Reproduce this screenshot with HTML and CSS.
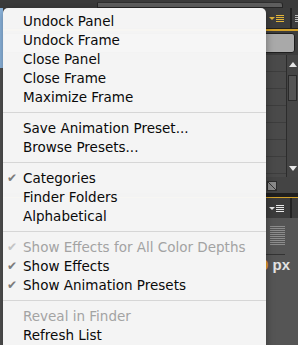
FILE: index.html
```html
<!DOCTYPE html>
<html lang="en">
<head>
  <meta charset="UTF-8" />
  <title>Effects &amp; Presets menu</title>
  <link rel="stylesheet" href="styles.css">
</head>
<body>

  <div class="app">
    <div class="topbar">
      <div class="topfield"></div>
    </div>

    <div class="workspace">
      <div class="leftstrip"></div>

      <div class="panel">
        <div class="panel-header">
          <span class="panel-menu yellow">
            <span class="tri"></span>
            <span class="lines"><i></i><i></i><i></i><i></i></span>
          </span>
          <span class="divider"></span>
          <span class="next-tab"><i></i><i></i><i></i><i></i></span>
        </div>
        <div class="accent"></div>
        <div class="search-row">
          <div class="search"></div>
        </div>
        <div class="list">
          <div class="rows">
            <div class="row"></div><div class="row"></div><div class="row"></div>
            <div class="row"></div><div class="row"></div><div class="row"></div>
            <div class="row"></div>
          </div>
          <div class="scrollbar">
            <span class="arrow up"></span>
            <span class="thumb"></span>
            <span class="arrow down"></span>
          </div>
        </div>
        <div class="panel-footer">
          <span class="resize"></span>
        </div>
        <div class="accent thick"></div>
        <div class="panel-header">
          <span class="panel-menu white">
            <span class="tri"></span>
            <span class="lines"><i></i><i></i><i></i><i></i></span>
          </span>
          <span class="divider"></span>
          <span class="next-tab"></span>
        </div>
        <div class="props">
          <div class="grip"><i></i><i></i><i></i><i></i><i></i><i></i><i></i><i></i><i></i><i></i></div>
          <div class="rule"></div>
          <div class="value"><b>0</b> px</div>
        </div>
      </div>
    </div>
  </div>

  <ul class="menu">
    <li>Undock Panel</li>
    <li>Undock Frame</li>
    <li>Close Panel</li>
    <li>Close Frame</li>
    <li>Maximize Frame</li>
    <li class="sep"></li>
    <li>Save Animation Preset...</li>
    <li>Browse Presets...</li>
    <li class="sep"></li>
    <li class="checked">Categories</li>
    <li>Finder Folders</li>
    <li>Alphabetical</li>
    <li class="sep"></li>
    <li class="checked disabled">Show Effects for All Color Depths</li>
    <li class="checked">Show Effects</li>
    <li class="checked">Show Animation Presets</li>
    <li class="sep"></li>
    <li class="disabled">Reveal in Finder</li>
    <li>Refresh List</li>
  </ul>

</body>
</html>
```

FILE: styles.css
```css
*, *::before, *::after { box-sizing: border-box; }

body {
  margin: 0;
  width: 298px;
  height: 345px;
  overflow: hidden;
  background-color: #555555;
  font-family: 'DejaVu Sans', Verdana, sans-serif;
  position: relative;
}

/* ---------- the application behind the menu ---------- */

.app {
  display: flex;
  flex-direction: column;
  height: 100%;
}

.topbar {
  height: 8px;
  background-color: #3b3b3b;
  padding: 2px 0 0 97px;
  display: flex;
}

.topfield {
  width: 186px;
  height: 6px;
  background-color: #5e5e5e;
  border: 1px solid #262626;
  border-top-color: #2f2f2f;
  border-radius: 0 3px 0 0;
}

.workspace {
  flex: 1;
  display: flex;
}

.leftstrip {
  width: 3px;
  background: linear-gradient(#8db6df 0, #8db6df 60px, #505050 60px);
}

.panel {
  flex: 1;
  display: flex;
  flex-direction: column;
  background-color: #555555;
}

.panel-header {
  height: 20px;
  background-color: #3c3c3c;
  display: flex;
  justify-content: flex-end;
  align-items: stretch;
}

.panel-menu {
  width: 13px;
  margin-right: 8px;
  display: flex;
  align-items: center;
  gap: 1px;
}

.panel-menu .tri {
  width: 0;
  height: 0;
  border-left: 3px solid transparent;
  border-right: 3px solid transparent;
  border-top: 3px solid #e0b33a;
}

.panel-menu .lines {
  display: flex;
  flex-direction: column;
  gap: 1px;
}

.panel-menu .lines i {
  display: block;
  width: 8px;
  height: 1px;
  background-color: #e0b33a;
}

.panel-menu.white .tri { border-top-color: #e8e8e8; }
.panel-menu.white .lines i { background-color: #e8e8e8; }

.divider {
  width: 2px;
  background-color: #222222;
}

.next-tab {
  width: 6px;
  display: flex;
  flex-direction: column;
  justify-content: center;
  gap: 1px;
  padding-left: 3px;
}

.next-tab i {
  display: block;
  height: 1px;
  background-color: #bbbbbb;
}

.accent {
  height: 3px;
  border-top: 1px solid #1f1f1f;
  background-color: #d2a12a;
}

.accent.thick {
  height: 5px;
  border-top: 4px solid #1f1f1f;
}

.search-row {
  height: 24px;
  background-color: #3c3c3c;
  padding: 2px 3px 2px 0;
  display: flex;
}

.search {
  flex: 1;
  background-color: #a9a9a9;
  border: 1px solid #1e1e1e;
  border-radius: 3px;
}

.list {
  height: 122px;
  display: flex;
  background-color: #4a4a4a;
}

.rows {
  flex: 1;
}

.row {
  height: 17px;
  border-bottom: 1px solid #3d3d3d;
}

.scrollbar {
  width: 12px;
  border-left: 1px solid #2c2c2c;
  display: flex;
  flex-direction: column;
  align-items: center;
  padding: 7px 0 6px;
  background-color: #454545;
}

.arrow {
  width: 0;
  height: 0;
  border-left: 4px solid transparent;
  border-right: 4px solid transparent;
}

.arrow.up { border-bottom: 5px solid #e6e6e6; }
.arrow.down { border-top: 5px solid #e6e6e6; margin-top: auto; }

.thumb {
  width: 9px;
  height: 26px;
  margin-top: 8px;
  border: 1px solid #2a2a2a;
  background-color: #555555;
}

.panel-footer {
  height: 16px;
  background-color: #444444;
  display: flex;
  justify-content: flex-end;
  padding: 4px 21px 0 0;
}

.resize {
  width: 10px;
  height: 10px;
  background-color: #8a8a8a;
  border: 1px solid #2c2c2c;
  background-image: linear-gradient(45deg, transparent 44%, #333 44%, #333 56%, transparent 56%);
}

.props {
  flex: 1;
  background-color: #555555;
  display: flex;
  flex-direction: column;
  align-items: flex-end;
  padding: 8px 13px 0 0;
}

.grip {
  display: flex;
  flex-direction: column;
  gap: 1px;
  width: 15px;
}

.grip i {
  display: block;
  height: 1px;
  background-color: #8c8c8c;
}

.rule {
  width: 20px;
  height: 1px;
  margin-top: 9px;
  background-color: #333333;
}

.value {
  margin-top: 1px;
  margin-right: -5px;
  font-family: 'Liberation Sans', Arial, sans-serif;
  font-size: 15px;
  color: #e2e2e2;
  font-weight: bold;
}

.value b { color: #e5a021; }

/* ---------- the context menu ---------- */

.menu {
  position: absolute;
  top: 8px;
  left: 3px;
  width: 263px;
  height: 350px;
  margin: 0;
  padding: 4px 0 0;
  list-style: none;
  background-color: rgba(247, 247, 247, 0.985);
  border-radius: 5px 5px 0 0;
  box-shadow: 0 2px 8px rgba(0, 0, 0, 0.35);
  font-size: 13.5px;
  color: #0a0a0a;
}

.menu li {
  height: 19px;
  line-height: 19px;
  padding-left: 20px;
  position: relative;
  white-space: nowrap;
}

.menu li.sep {
  height: 12px;
  padding: 0;
}

.menu li.sep::after {
  content: "";
  position: absolute;
  left: 0;
  right: 0;
  top: 5px;
  height: 1px;
  background-color: #d6d6d6;
}

.menu li.checked::before {
  content: "\2714";
  position: absolute;
  left: 4px;
  top: 0;
  font-size: 12px;
  color: #7c7c7c;
}

.menu li.disabled { color: #a3a3a3; }
.menu li.disabled::before { color: #c4c4c4; }
```
